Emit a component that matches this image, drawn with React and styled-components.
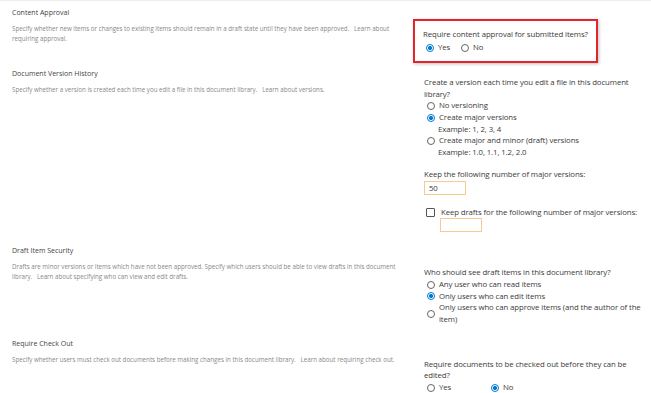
import styled, { createGlobalStyle } from 'styled-components'

const Global = createGlobalStyle`
  html, body { margin: 0; padding: 0; background: #fff; }
  body { font-family: "Open Sans", "Noto Sans", sans-serif; color: #323130; }
`;

const SECTIONS = [
  {
    title: 'Content Approval',
    desc: 'Specify whether new items or changes to existing items should remain in a draft state until they have been approved.\u00a0\u00a0 Learn about requiring approval.',
    offset: 12,
    gap: 5,
    key: 'approval',
  },
  {
    title: 'Document Version History',
    desc: 'Specify whether a version is created each time you edit a file in this document library.\u00a0\u00a0 Learn about versions.',
    offset: 9,
    gap: 13,
    key: 'versions',
  },
  {
    title: 'Draft Item Security',
    desc: 'Drafts are minor versions or items which have not been approved. Specify which users should be able to view drafts in this document library.\u00a0\u00a0 Learn about specifying who can view and edit drafts.',
    offset: 22,
    gap: 12,
    key: 'drafts',
  },
  {
    title: 'Require Check Out',
    desc: 'Specify whether users must check out documents before making changes in this document library.\u00a0\u00a0 Learn about requiring check out.',
    offset: 21,
    gap: 0,
    key: 'checkout',
  },
];

function Radio({ checked, label, width, hint }) {
  return (
    <Option $width={width}>
      <OptionRow>
        <Circle $checked={checked} />
        <span>{label}</span>
      </OptionRow>
      {hint && <Hint>{hint}</Hint>}
    </Option>
  );
}

function Approval() {
  return (
    <Highlight>
      <Question>Require content approval for submitted items?</Question>
      <Inline $top={1.5}>
        <Radio checked label="Yes" width={35} />
        <Radio label="No" />
      </Inline>
    </Highlight>
  );
}

function Versions() {
  return (
    <Plain>
      <Question>Create a version each time you edit a file in this document library?</Question>
      <Radio label="No versioning" />
      <Radio checked label="Create major versions" hint="Example: 1, 2, 3, 4" />
      <Radio label="Create major and minor (draft) versions" hint="Example: 1.0, 1.1, 1.2, 2.0" />
      <Field>
        <Question>Keep the following number of major versions:</Question>
        <TextBox>50</TextBox>
      </Field>
      <CheckRow>
        <Box />
        <span>Keep drafts for the following number of major versions:</span>
      </CheckRow>
      <TextBox $indent />
    </Plain>
  );
}

function Drafts() {
  return (
    <Plain>
      <Question>Who should see draft items in this document library?</Question>
      <Radio label="Any user who can read items" />
      <Radio checked label="Only users who can edit items" />
      <Radio label="Only users who can approve items (and the author of the item)" />
    </Plain>
  );
}

function Checkout() {
  return (
    <Plain>
      <Question>Require documents to be checked out before they can be edited?</Question>
      <Inline>
        <Radio label="Yes" width={64} />
        <Radio checked label="No" />
      </Inline>
    </Plain>
  );
}

const CONTROLS = {
  approval: Approval,
  versions: Versions,
  drafts: Drafts,
  checkout: Checkout,
};

export default function App() {
  return (
    <>
      <Global />
      <Page>
        {SECTIONS.map((s) => {
          const Control = CONTROLS[s.key];
          return (
            <Section key={s.key} $gap={s.gap}>
              <Info>
                <Title>{s.title}</Title>
                <Desc>{s.desc}</Desc>
              </Info>
              <Right $offset={s.offset}>
                <Control />
              </Right>
            </Section>
          );
        })}
      </Page>
    </>
  );
}

const Page = styled.div`
  width: 651px;
  height: 393px;
  overflow: hidden;
  border-top: 1px solid #eeeeee;
  box-sizing: border-box;
  padding-top: 6px;
`;

const Section = styled.div`
  display: grid;
  grid-template-columns: 401px 246px;
  margin-bottom: ${(p) => p.$gap}px;
`;

const Info = styled.div`
  padding-left: 12px;
  padding-right: 3px;
`;

const Title = styled.div`
  font-size: 7px;
  line-height: 12px;
  color: #444;
`;

const Desc = styled.div`
  margin-top: 5px;
  font-size: 6.2px;
  line-height: 9.5px;
  color: #888;
`;

const Right = styled.div`
  padding-top: ${(p) => p.$offset}px;
  font-size: 7.8px;
  line-height: 11.7px;
  letter-spacing: -0.1px;
  color: #3a3a3a;
`;

const Highlight = styled.div`
  width: 185px;
  margin-left: 12px;
  box-sizing: border-box;
  padding: 8px 2px 7px 8px;
  border: 2px solid #e3242b;
  box-shadow: 1px 1px 3px rgba(0, 0, 0, 0.25);
`;

const Plain = styled.div`
  padding-left: 23px;
`;

const Question = styled.div``;

const Inline = styled.div`
  display: flex;
  margin-top: ${(p) => p.$top || 0}px;
`;

const Option = styled.div`
  ${(p) => (p.$width ? `width: ${p.$width}px;` : '')}
`;

const OptionRow = styled.div`
  display: flex;
  align-items: center;
`;

const Circle = styled.span`
  flex: none;
  width: 6px;
  height: 6px;
  margin: 0 4px 0 3px;
  border-radius: 50%;
  border: 1px solid ${(p) => (p.$checked ? '#0078d4' : '#666')};
  background: ${(p) => (p.$checked ? 'radial-gradient(circle, #0078d4 0 1.8px, #fff 2.3px)' : '#fff')};
`;

const Hint = styled.div`
  padding-left: 14px;
`;

const Field = styled.div`
  margin-top: 10px;
`;

const TextBox = styled.div`
  width: 42px;
  height: 14px;
  box-sizing: border-box;
  border: 1px solid #f7c993;
  padding-left: 4px;
  line-height: 12px;
  margin-left: ${(p) => (p.$indent ? '16px' : '0')};
`;

const CheckRow = styled.div`
  display: flex;
  align-items: center;
  margin-top: 12px;
`;

const Box = styled.span`
  flex: none;
  width: 7px;
  height: 7px;
  margin: 0 6px 0 2px;
  border: 1px solid #555;
  border-radius: 1px;
`;
